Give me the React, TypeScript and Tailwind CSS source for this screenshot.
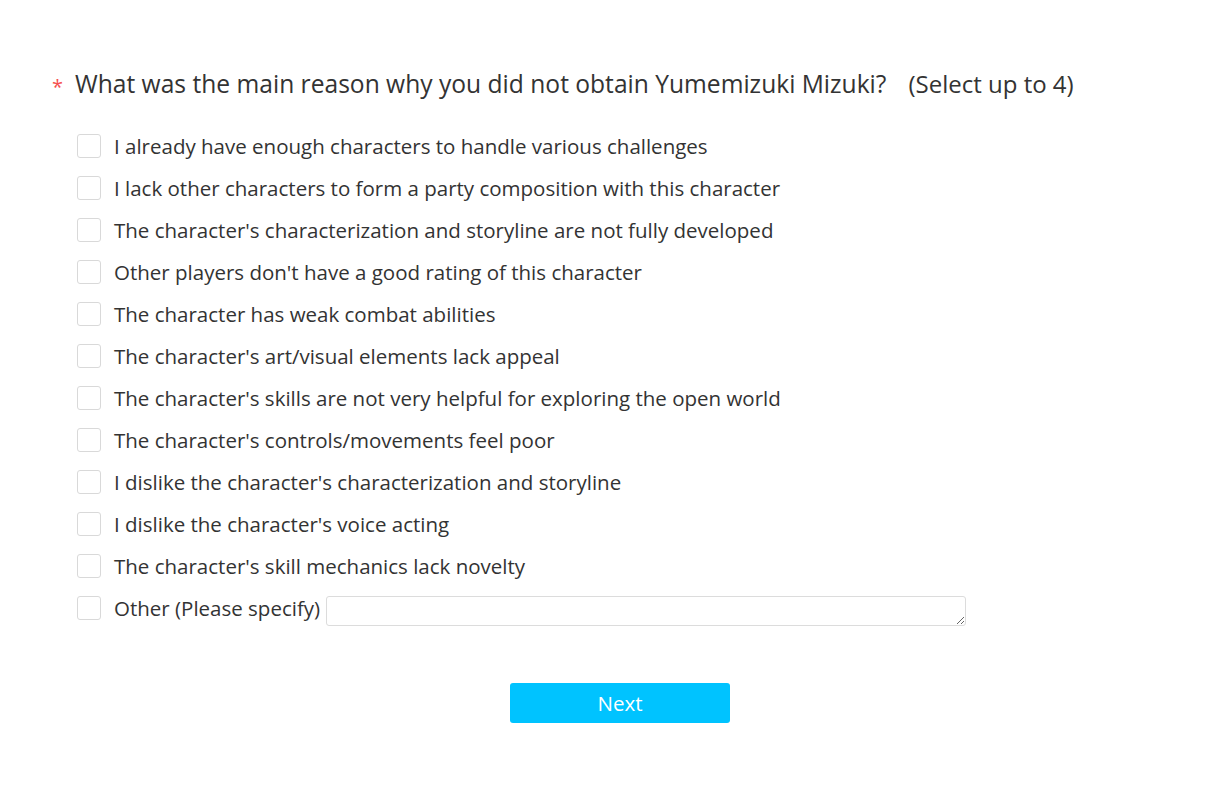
import React from "react";

const options = [
  "I already have enough characters to handle various challenges",
  "I lack other characters to form a party composition with this character",
  "The character's characterization and storyline are not fully developed",
  "Other players don't have a good rating of this character",
  "The character has weak combat abilities",
  "The character's art/visual elements lack appeal",
  "The character's skills are not very helpful for exploring the open world",
  "The character's controls/movements feel poor",
  "I dislike the character's characterization and storyline",
  "I dislike the character's voice acting",
  "The character's skill mechanics lack novelty",
];

function Box() {
  return <span className="w-[24px] h-[24px] shrink-0 rounded-[3px] border border-[#d9d9d9] bg-white" />;
}

export default function App() {
  return (
    <div className="min-h-[805px] bg-white text-[#333] pt-[66px] pl-[52px]" style={{ fontFamily: '"Open Sans", "Noto Sans", sans-serif' }}>
      <div className="flex items-center h-[36px]">
        <span className="w-[23px] text-[#f5504f] text-[20px] leading-none pt-[6px]">*</span>
        <span className="text-[24.6px]">What was the main reason why you did not obtain Yumemizuki Mizuki?</span>
        <span className="text-[24px] ml-[22px]">(Select up to 4)</span>
      </div>
      <div className="mt-[32px] pl-[25px] flex flex-col gap-[18px]">
        {options.map((o) => (
          <label key={o} className="flex items-center h-[24px]">
            <Box />
            <span className="ml-[13px] text-[20.5px]">{o}</span>
          </label>
        ))}
        <label className="flex items-center h-[24px]">
          <Box />
          <span className="ml-[13px] text-[20.5px]">Other (Please specify)</span>
          <textarea className="ml-[6px] w-[640px] h-[30px] border border-[#dcdcdc] rounded-[3px] resize-y mt-[6px]" />
        </label>
      </div>
      <div className="w-[1136px] flex justify-center mt-[63px]">
        <button className="w-[220px] h-[40px] rounded-[3px] bg-[#00c3ff] text-white text-[20.5px]">Next</button>
      </div>
    </div>
  );
}
